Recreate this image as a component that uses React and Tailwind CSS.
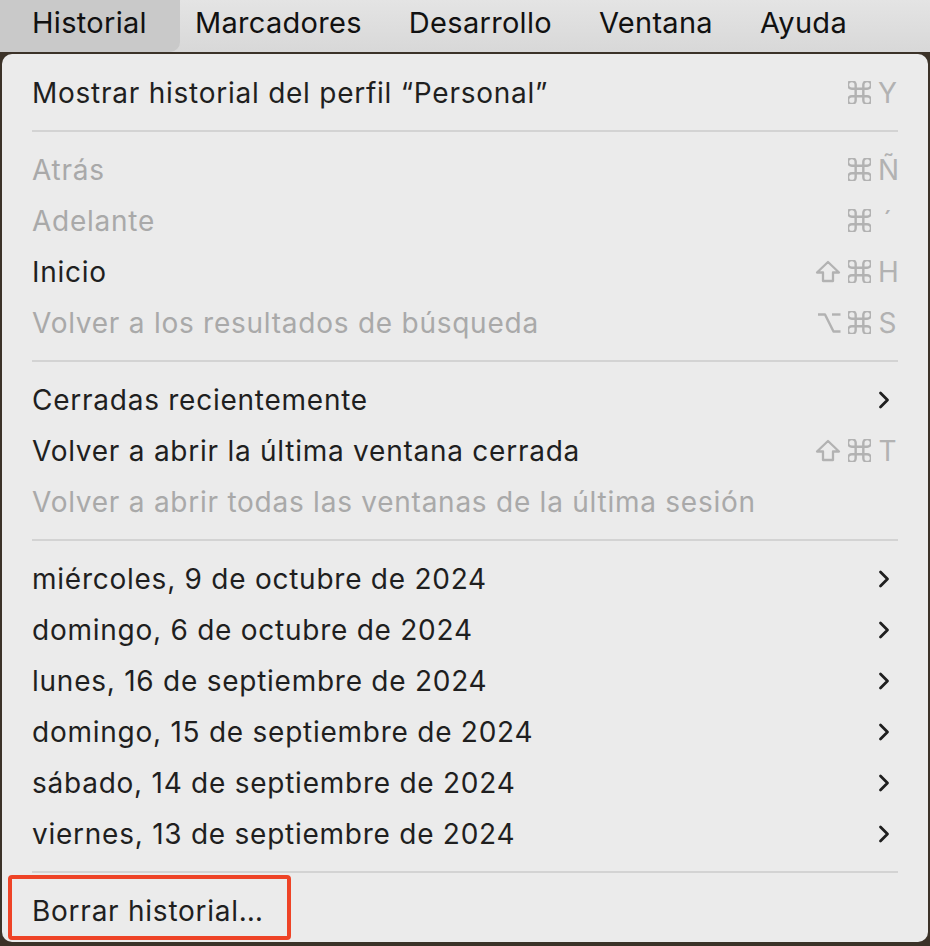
import React from "react";

const sans = { fontFamily: "Inter, 'Noto Sans', sans-serif" };

function Chevron() {
  return (
    <svg width="14" height="20" viewBox="0 0 14 20" className="mr-[6px]">
      <path d="M3.5 3 L10.5 10 L3.5 17" fill="none" stroke="#1f1f1f" strokeWidth="2.8" strokeLinecap="round" strokeLinejoin="round" />
    </svg>
  );
}

function Cmd() {
  return (
    <svg width="23" height="23" viewBox="3 3 18 18" fill="none" stroke="#b2b2b2" strokeWidth="1.9" strokeLinecap="round" strokeLinejoin="round">
      <path d="M15 6v12a3 3 0 1 0 3-3H6a3 3 0 1 0 3 3V6a3 3 0 1 0-3 3h12a3 3 0 1 0-3-3" />
    </svg>
  );
}

function Shift() {
  return (
    <svg width="26" height="23" viewBox="0 0 26 23" fill="none" stroke="#b2b2b2" strokeWidth="2.3" strokeLinejoin="round">
      <path d="M13 2 L24 12.5 H18 V21 H8 V12.5 H2 Z" />
    </svg>
  );
}

function Opt() {
  return (
    <svg width="24" height="22" viewBox="0 0 24 22" fill="none" stroke="#b2b2b2" strokeWidth="2.4" strokeLinejoin="round">
      <path d="M1 2.5 H8 L16.5 19.5 H23.5" />
      <path d="M15 2.5 H23.5" />
    </svg>
  );
}

const glyphs = { cmd: <Cmd />, shift: <Shift />, opt: <Opt /> };

function Shortcut({ mods, letter }) {
  return (
    <span className="flex items-center gap-[7px] text-[28px] text-[#b2b2b2] leading-none">
      {mods.map((m) => (
        <span key={m} className="flex">{glyphs[m]}</span>
      ))}
      <span className="w-[19px] text-center">{letter}</span>
    </span>
  );
}

function Item({ label, disabled, mods, letter, sub }) {
  return (
    <div className="h-[51px] flex items-center justify-between pl-[30px] pr-[31px]">
      <span className={"text-[28px] tracking-[0.75px] " + (disabled ? "text-[#a9a9a9]" : "text-[#1f1f1f]")}>{label}</span>
      {mods && <Shortcut mods={mods} letter={letter} />}
      {sub && <Chevron />}
    </div>
  );
}

function Sep() {
  return (
    <div className="h-[26px] flex items-center px-[30px]">
      <div className="h-[2px] w-full bg-[#d3d3d3]" />
    </div>
  );
}

export default function App() {
  const menus = ["Marcadores", "Desarrollo", "Ventana", "Ayuda"];
  const dates = [
    "miércoles, 9 de octubre de 2024",
    "domingo, 6 de octubre de 2024",
    "lunes, 16 de septiembre de 2024",
    "domingo, 15 de septiembre de 2024",
    "sábado, 14 de septiembre de 2024",
    "viernes, 13 de septiembre de 2024",
  ];
  return (
    <div className="w-[930px] h-[946px] flex flex-col bg-[#3b3228] overflow-hidden" style={sans}>
      <div className="h-[52px] flex items-stretch bg-gradient-to-b from-[#e4e4e4] to-[#d8d8d8] text-[29px] tracking-[0.3px] text-[#111]">
        <div className="w-[180px] bg-[#c9c9c9] rounded-br-[10px] flex items-center pl-[32px] pb-[6px]">Historial</div>
        <div className="flex items-center gap-[47px] pl-[15px] pb-[6px]">
          {menus.map((m) => (
            <span key={m}>{m}</span>
          ))}
        </div>
      </div>
      <div className="h-[2px]" />
      <div className="mx-[2px] h-[888px] bg-[#ebebeb] rounded-[10px] pt-[13px]">
        <Item label="Mostrar historial del perfil “Personal”" mods={["cmd"]} letter="Y" />
        <Sep />
        <Item label="Atrás" disabled mods={["cmd"]} letter="Ñ" />
        <Item label="Adelante" disabled mods={["cmd"]} letter="´" />
        <Item label="Inicio" mods={["shift", "cmd"]} letter="H" />
        <Item label="Volver a los resultados de búsqueda" disabled mods={["opt", "cmd"]} letter="S" />
        <Sep />
        <Item label="Cerradas recientemente" sub />
        <Item label="Volver a abrir la última ventana cerrada" mods={["shift", "cmd"]} letter="T" />
        <Item label="Volver a abrir todas las ventanas de la última sesión" disabled />
        <Sep />
        {dates.map((d) => (
          <Item key={d} label={d} sub />
        ))}
        <Sep />
        <div className="relative">
          <Item label="Borrar historial…" />
          <div className="absolute left-[6px] top-[-10px] w-[283px] h-[65px] border-[4px] border-[#ee4326] rounded-[4px]" />
        </div>
      </div>
    </div>
  );
}
